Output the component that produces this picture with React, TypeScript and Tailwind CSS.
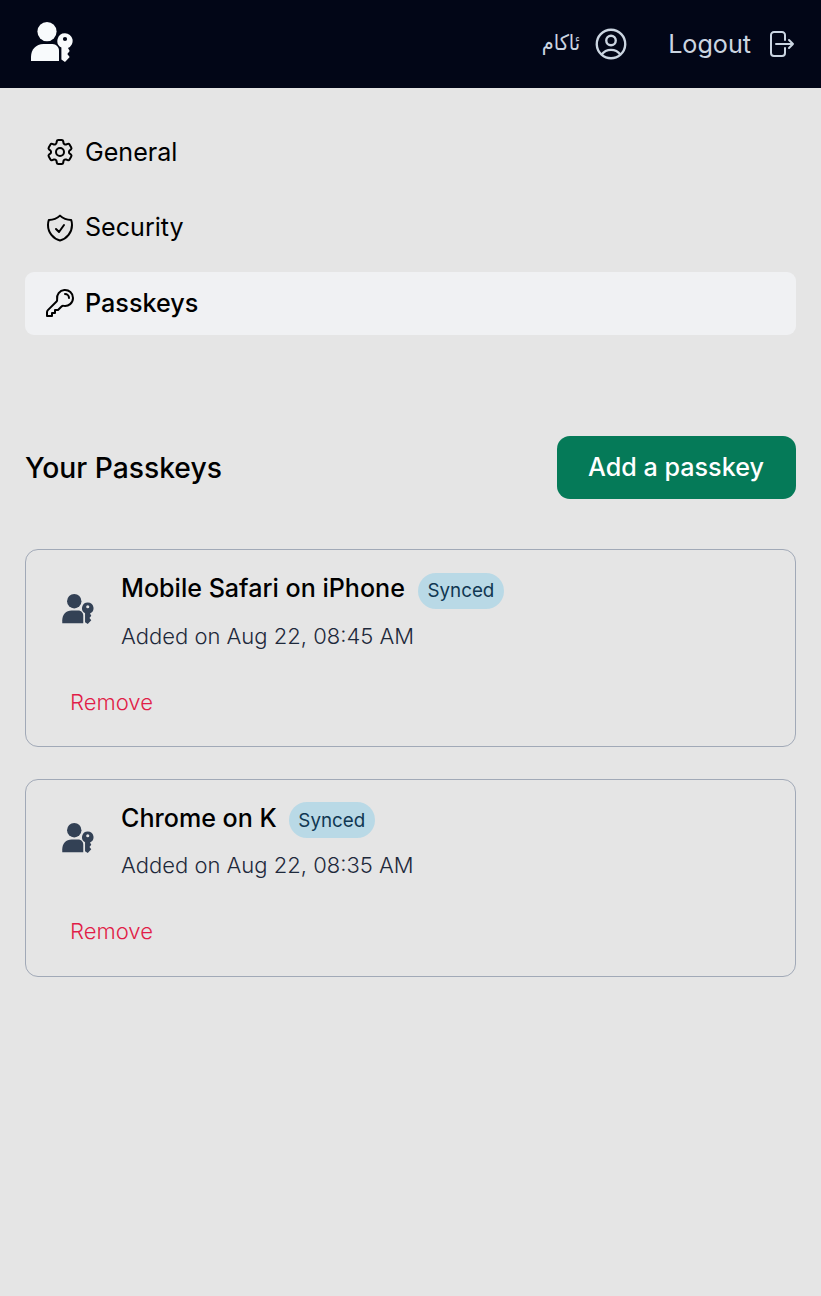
import {
  HiOutlineArrowRightOnRectangle,
  HiOutlineCog6Tooth,
  HiOutlineKey,
  HiOutlineShieldCheck,
  HiOutlineUserCircle,
} from "react-icons/hi2";

function PasskeyIcon({ className }: { className: string }) {
  return (
    <svg viewBox="0 0 42 40" fill="currentColor" className={className} aria-hidden="true">
      <circle cx="16" cy="9.6" r="9.6" />
      <path d="M0 39V35C0 27.500 5 22 12.500 22H21.500C25 22 28 25 28 28.500V39Z" />
      <path
        fillRule="evenodd"
        d="M34 11.300A7.600 7.600 0 0 0 30.400 25.600V37.500L34 40L38.700 35L36.300 32L38.700 29L37 25.900A7.600 7.600 0 0 0 34 11.300ZM34 14.900A2.100 2.100 0 1 1 34 19.100A2.100 2.100 0 1 1 34 14.900Z"
      />
    </svg>
  );
}

const navItems = [
  { label: "General", Icon: HiOutlineCog6Tooth, active: false, iconClass: "mb-[3px] size-8" },
  { label: "Security", Icon: HiOutlineShieldCheck, active: false, iconClass: "mb-px size-8" },
  { label: "Passkeys", Icon: HiOutlineKey, active: true, iconClass: "mb-px size-8" },
];

const passkeys = [
  {
    name: "Mobile Safari on iPhone",
    added: "Added on Aug 22, 08:45 AM",
    rowClass: "flex pt-[22px]",
    titleClass: "pb-1",
    badgeClass: "pt-px",
  },
  {
    name: "Chrome on K",
    added: "Added on Aug 22, 08:35 AM",
    rowClass: "flex pt-[21px]",
    titleClass: "pb-0.5",
    badgeClass: "-ml-px pt-[3px]",
  },
];

export default function App() {
  return (
    <div className="min-h-[1296px] bg-[#e5e5e5] font-['Inter',sans-serif] text-black">
      <header className="flex h-[88px] items-center justify-between bg-[#020617] pr-[25px] pl-[31px] text-[#cbd5e1]">
        <PasskeyIcon className="mb-1 h-10 w-[42px] text-[#f8fafc]" />
        <div className="flex items-center">
          <span
            lang="ckb"
            dir="rtl"
            className="pb-0.5 font-['DejaVu_Sans_Condensed','DejaVu_Sans',sans-serif] text-[21.500px] leading-8 [font-stretch:condensed]"
          >
            ئاکام
          </span>
          <HiOutlineUserCircle className="ml-3 size-[38px]" />
          <span className="ml-[38px] text-[25.150px] leading-9">Logout</span>
          <HiOutlineArrowRightOnRectangle className="mb-px ml-[13px] size-8" />
        </div>
      </header>

      <main className="px-[25px] pt-[34px]">
        <nav className="flex flex-col gap-[13px]">
          {navItems.map(({ label, Icon, active, iconClass }) => (
            <a
              key={label}
              className={
                active
                  ? "flex h-[63px] items-center gap-[9px] rounded-[9px] bg-[#f0f1f3] pl-[19px] text-[25.200px] font-medium"
                  : "flex h-[62px] items-center gap-[9px] rounded-[9px] pl-[19px] text-[25.100px]"
              }
            >
              <Icon className={iconClass} />
              <span>{label}</span>
            </a>
          ))}
        </nav>

        <section className="mt-[101px]">
          <div className="flex items-center justify-between">
            <h1 className="pt-0.5 text-[28.250px] font-medium">Your Passkeys</h1>
            <button className="h-[63px] w-[239px] rounded-[13px] bg-[#057a58] pr-px text-[25.150px] font-medium text-white">
              Add a passkey
            </button>
          </div>

          <div className="mt-[50px] flex flex-col gap-8">
            {passkeys.map(({ name, added, rowClass, titleClass, badgeClass }) => (
              <article key={name} className="h-[198px] rounded-[13px] border border-[#a1a9b7] pl-9">
                <div className={rowClass}>
                  <PasskeyIcon className="mt-[22px] h-[30px] w-8 text-[#334155]" />
                  <div className="ml-[27px]">
                    <div className="flex h-9 items-center gap-[13px]">
                      <h2 className={`${titleClass} text-[25.100px] leading-8 font-medium`}>{name}</h2>
                      <span
                        className={`${badgeClass} mt-px flex h-9 w-[86px] items-center justify-center rounded-full bg-[#b9d9e6] text-[18.800px] text-[#103752]`}
                      >
                        Synced
                      </span>
                    </div>
                    <p className="mt-3 text-[22px] leading-8 font-light text-[#1e293b]">{added}</p>
                  </div>
                </div>
                <button className="mt-[34px] ml-2 block text-[22.050px] leading-8 font-light text-[#e11d48]">
                  Remove
                </button>
              </article>
            ))}
          </div>
        </section>
      </main>
    </div>
  );
}
